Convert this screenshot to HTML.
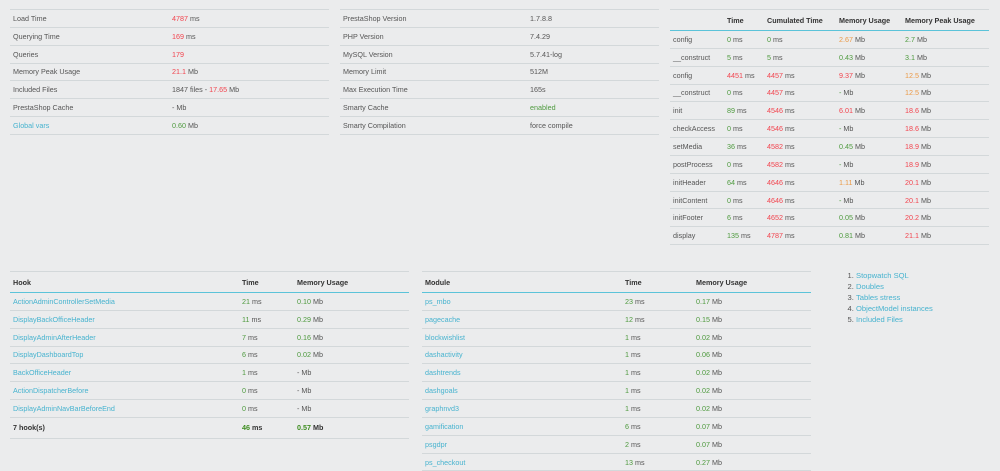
<!DOCTYPE html>
<html><head><meta charset="utf-8"><style>
body{margin:0;width:1000px;height:468px;background:#ebeced;font-family:"Liberation Sans",sans-serif;font-size:7.2px;color:#555;overflow:hidden;position:relative}
table{position:absolute;border-collapse:collapse;table-layout:fixed}
td,th{padding:0 3px;height:16.85px;border-bottom:1px solid #d3d8da;text-align:left;white-space:nowrap;overflow:hidden}
table.t tr:first-child td{border-top:1px solid #d3d8da}
th{font-weight:bold;color:#333;height:20px;border-top:1px solid #d3d8da;border-bottom:1px solid #5bc3d9}
.r{color:#f2444e}.g{color:#4e9a3e}.o{color:#eb9a48}.b{color:#47b3cf}
.tot td{font-weight:bold;color:#333;height:20px;border-top:1px solid #5bc3d9}
.tot .g{color:#3d8d1f}
ol{position:absolute;left:846px;top:270px;margin:0;padding-left:10px;line-height:11px;font-size:7.6px}
ol li{color:#555}ol span{color:#47b3cf}
</style></head><body>
<table class="t" style="left:10px;top:9px;width:319px"><col style="width:159px"><col>
<tr><td>Load Time</td><td><span class="r">4787</span> ms</td></tr>
<tr><td>Querying Time</td><td><span class="r">169</span> ms</td></tr>
<tr><td>Queries</td><td><span class="r">179</span></td></tr>
<tr><td>Memory Peak Usage</td><td><span class="r">21.1</span> Mb</td></tr>
<tr><td>Included Files</td><td>1847 files - <span class="r">17.65</span> Mb</td></tr>
<tr><td>PrestaShop Cache</td><td>- Mb</td></tr>
<tr><td class="b">Global vars</td><td><span class="g">0.60</span> Mb</td></tr>
</table>
<table class="t" style="left:340px;top:9px;width:319px"><col style="width:187px"><col>
<tr><td>PrestaShop Version</td><td>1.7.8.8</td></tr>
<tr><td>PHP Version</td><td>7.4.29</td></tr>
<tr><td>MySQL Version</td><td>5.7.41-log</td></tr>
<tr><td>Memory Limit</td><td>512M</td></tr>
<tr><td>Max Execution Time</td><td>165s</td></tr>
<tr><td>Smarty Cache</td><td><span class="g">enabled</span></td></tr>
<tr><td>Smarty Compilation</td><td>force compile</td></tr>
</table>
<table style="left:670px;top:9px;width:319px"><col style="width:54px"><col style="width:40px"><col style="width:72px"><col style="width:66px"><col>
<tr><th></th><th>Time</th><th>Cumulated Time</th><th>Memory Usage</th><th>Memory Peak Usage</th></tr>
<tr><td>config</td><td><span class="g">0</span> ms</td><td><span class="g">0</span> ms</td><td><span class="o">2.67</span> Mb</td><td><span class="g">2.7</span> Mb</td></tr>
<tr><td>__construct</td><td><span class="g">5</span> ms</td><td><span class="g">5</span> ms</td><td><span class="g">0.43</span> Mb</td><td><span class="g">3.1</span> Mb</td></tr>
<tr><td>config</td><td><span class="r">4451</span> ms</td><td><span class="r">4457</span> ms</td><td><span class="r">9.37</span> Mb</td><td><span class="o">12.5</span> Mb</td></tr>
<tr><td>__construct</td><td><span class="g">0</span> ms</td><td><span class="r">4457</span> ms</td><td><span class="g">-</span> Mb</td><td><span class="o">12.5</span> Mb</td></tr>
<tr><td>init</td><td><span class="g">89</span> ms</td><td><span class="r">4546</span> ms</td><td><span class="r">6.01</span> Mb</td><td><span class="r">18.6</span> Mb</td></tr>
<tr><td>checkAccess</td><td><span class="g">0</span> ms</td><td><span class="r">4546</span> ms</td><td><span class="g">-</span> Mb</td><td><span class="r">18.6</span> Mb</td></tr>
<tr><td>setMedia</td><td><span class="g">36</span> ms</td><td><span class="r">4582</span> ms</td><td><span class="g">0.45</span> Mb</td><td><span class="r">18.9</span> Mb</td></tr>
<tr><td>postProcess</td><td><span class="g">0</span> ms</td><td><span class="r">4582</span> ms</td><td><span class="g">-</span> Mb</td><td><span class="r">18.9</span> Mb</td></tr>
<tr><td>initHeader</td><td><span class="g">64</span> ms</td><td><span class="r">4646</span> ms</td><td><span class="o">1.11</span> Mb</td><td><span class="r">20.1</span> Mb</td></tr>
<tr><td>initContent</td><td><span class="g">0</span> ms</td><td><span class="r">4646</span> ms</td><td><span class="g">-</span> Mb</td><td><span class="r">20.1</span> Mb</td></tr>
<tr><td>initFooter</td><td><span class="g">6</span> ms</td><td><span class="r">4652</span> ms</td><td><span class="g">0.05</span> Mb</td><td><span class="r">20.2</span> Mb</td></tr>
<tr><td>display</td><td><span class="g">135</span> ms</td><td><span class="r">4787</span> ms</td><td><span class="g">0.81</span> Mb</td><td><span class="r">21.1</span> Mb</td></tr>
</table>
<table style="left:10px;top:271px;width:399px"><col style="width:229px"><col style="width:55px"><col>
<tr><th>Hook</th><th>Time</th><th>Memory Usage</th></tr>
<tr><td class="b">ActionAdminControllerSetMedia</td><td><span class="g">21</span> ms</td><td><span class="g">0.10</span> Mb</td></tr>
<tr><td class="b">DisplayBackOfficeHeader</td><td><span class="g">11</span> ms</td><td><span class="g">0.29</span> Mb</td></tr>
<tr><td class="b">DisplayAdminAfterHeader</td><td><span class="g">7</span> ms</td><td><span class="g">0.16</span> Mb</td></tr>
<tr><td class="b">DisplayDashboardTop</td><td><span class="g">6</span> ms</td><td><span class="g">0.02</span> Mb</td></tr>
<tr><td class="b">BackOfficeHeader</td><td><span class="g">1</span> ms</td><td>- Mb</td></tr>
<tr><td class="b">ActionDispatcherBefore</td><td><span class="g">0</span> ms</td><td>- Mb</td></tr>
<tr><td class="b">DisplayAdminNavBarBeforeEnd</td><td><span class="g">0</span> ms</td><td>- Mb</td></tr>
<tr class="tot"><td>7 hook(s)</td><td><span class="g">46</span> ms</td><td><span class="g">0.57</span> Mb</td></tr>
</table>
<table style="left:422px;top:271px;width:389px"><col style="width:200px"><col style="width:71px"><col>
<tr><th>Module</th><th>Time</th><th>Memory Usage</th></tr>
<tr><td class="b">ps_mbo</td><td><span class="g">23</span> ms</td><td><span class="g">0.17</span> Mb</td></tr>
<tr><td class="b">pagecache</td><td><span class="g">12</span> ms</td><td><span class="g">0.15</span> Mb</td></tr>
<tr><td class="b">blockwishlist</td><td><span class="g">1</span> ms</td><td><span class="g">0.02</span> Mb</td></tr>
<tr><td class="b">dashactivity</td><td><span class="g">1</span> ms</td><td><span class="g">0.06</span> Mb</td></tr>
<tr><td class="b">dashtrends</td><td><span class="g">1</span> ms</td><td><span class="g">0.02</span> Mb</td></tr>
<tr><td class="b">dashgoals</td><td><span class="g">1</span> ms</td><td><span class="g">0.02</span> Mb</td></tr>
<tr><td class="b">graphnvd3</td><td><span class="g">1</span> ms</td><td><span class="g">0.02</span> Mb</td></tr>
<tr><td class="b">gamification</td><td><span class="g">6</span> ms</td><td><span class="g">0.07</span> Mb</td></tr>
<tr><td class="b">psgdpr</td><td><span class="g">2</span> ms</td><td><span class="g">0.07</span> Mb</td></tr>
<tr><td class="b">ps_checkout</td><td><span class="g">13</span> ms</td><td><span class="g">0.27</span> Mb</td></tr>
</table>
<ol>
<li><span>Stopwatch SQL</span></li>
<li><span>Doubles</span></li>
<li><span>Tables stress</span></li>
<li><span>ObjectModel instances</span></li>
<li><span>Included Files</span></li>
</ol>
</body></html>
